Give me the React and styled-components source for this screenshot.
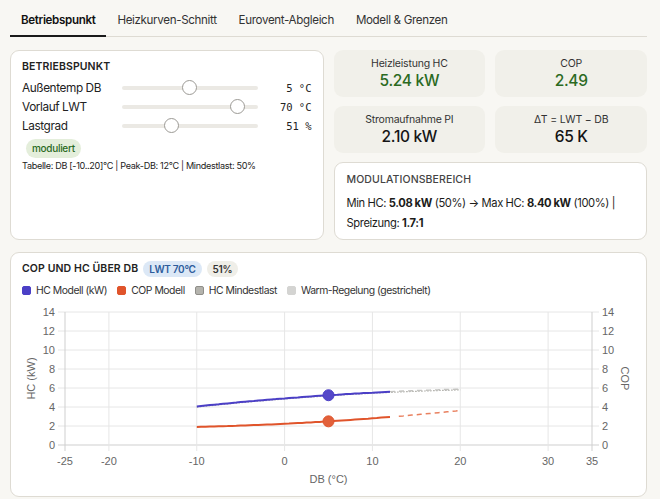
import React from 'react';
import styled, { createGlobalStyle } from 'styled-components';

const GlobalStyle = createGlobalStyle`
    body {
        margin: 0;
        background: #f8f7f3;
        font-family: Inter, "Noto Sans", sans-serif;
        color: #1c1c1a;
    }
`;

const Page = styled.div`
    padding: 0 13px 0 10px;
`;

const TabBar = styled.div`
    display: flex;
    border-bottom: 1px solid #dedbd3;
`;

const Tab = styled.div`
    padding: 12px 11px 7px;
    font-size: 11.6px;
    line-height: 16px;
    letter-spacing: -0.03em;
    color: ${p => (p.active ? '#111' : '#333')};
    font-weight: ${p => (p.active ? 600 : 400)};
    border-bottom: 2px solid ${p => (p.active ? '#1a1a1a' : 'transparent')};
    margin-bottom: -1px;
`;

const TopGrid = styled.div`
    display: grid;
    grid-template-columns: 1fr 1fr;
    gap: 10px;
    margin-top: 13px;
`;

const Card = styled.div`
    background: #fff;
    border: 1px solid #dedbd3;
    border-radius: 9px;
    box-sizing: border-box;
`;

const SliderCard = styled(Card)`
    padding: 9px 11px 10px 11px;
`;

const CardTitle = styled.div`
    font-size: 10.5px;
    line-height: 14px;
    font-weight: ${p => p.weight || 600};
    letter-spacing: 0.01em;
    text-transform: uppercase;
    white-space: nowrap;
    color: ${p => p.color || '#222'};
`;

const SliderRow = styled.div`
    display: grid;
    grid-template-columns: 100px 1fr 54px;
    align-items: center;
    height: 19px;
`;

const RowLabel = styled.div`
    font-size: 11.8px;
    letter-spacing: -0.035em;
    color: #222;
`;

const Track = styled.div`
    position: relative;
    height: 4px;
    border-radius: 2px;
    background: #ebe9e4;
`;

const Thumb = styled.div`
    position: absolute;
    top: 50%;
    width: 15px;
    height: 15px;
    margin-left: -7.5px;
    margin-top: -7.5px;
    border-radius: 50%;
    background: #fff;
    border: 1px solid #9c9a95;
    box-sizing: border-box;
`;

const RowValue = styled.div`
    font-family: "DejaVu Sans Mono", monospace;
    font-size: 10.5px;
    text-align: right;
    color: #222;
`;

const SliderRows = styled.div`
    margin-top: 4px;
`;

const Pill = styled.span`
    display: inline-block;
    font-size: ${p => p.size || 10}px;
    line-height: ${p => p.h || 19}px;
    padding: 0 6px;
    border-radius: 10px;
    letter-spacing: -0.03em;
    background: ${p => p.bg};
    color: ${p => p.fg};
    font-weight: ${p => p.weight || 500};
`;

const BadgeLine = styled.div`
    display: flex;
    margin: 4px 0 0 4px;
`;

const Note = styled.div`
    margin-top: 1px;
    font-size: 9.1px;
    line-height: 14px;
    letter-spacing: -0.035em;
    color: #222;
`;

const RightCol = styled.div`
    display: flex;
    flex-direction: column;
    gap: 9px;
`;

const MetricGrid = styled.div`
    display: grid;
    grid-template-columns: 1fr 1fr;
    gap: 9px 10px;
`;

const Metric = styled.div`
    background: #f1f0ea;
    border-radius: 9px;
    height: 47px;
    display: flex;
    flex-direction: column;
    align-items: center;
    justify-content: center;
`;

const MetricLabel = styled.div`
    font-size: 10.5px;
    line-height: 14px;
    letter-spacing: -0.02em;
    color: #333;
`;

const MetricValue = styled.div`
    font-size: 15.5px;
    line-height: 20px;
    font-weight: 500;
    letter-spacing: -0.02em;
    color: ${p => (p.green ? '#2b6a1f' : '#151515')};
`;

const ModCard = styled(Card)`
    flex: 1;
    padding: 10px 12px 6px 12px;
`;

const ModText = styled.div`
    margin-top: 6px;
    font-size: 11.2px;
    line-height: 20px;
    letter-spacing: -0.035em;
    color: #1c1c1a;

    b {
        font-weight: 700;
    }
`;

const ChartCard = styled(Card)`
    margin-top: 12px;
    padding: 8px 11px 8px 11px;
`;

const ChartHead = styled.div`
    display: flex;
    align-items: center;
    gap: 5px;
`;

const Legend = styled.div`
    display: flex;
    align-items: center;
    gap: 10px;
    margin-top: 5px;
    height: 16px;
`;

const LegendItem = styled.div`
    display: flex;
    align-items: center;
    gap: 5px;
    font-size: 10.4px;
    letter-spacing: -0.045em;
    color: #333;
`;

const Swatch = styled.span`
    width: 9px;
    height: 9px;
    border-radius: 2px;
    box-sizing: border-box;
    background: ${p => p.fill};
    border: 1px solid ${p => p.edge || p.fill};
`;

const ChartSvg = styled.svg`
    display: block;
    margin-top: 4px;
    font-family: "Liberation Sans", Arial, sans-serif;
`;

const sliders = [
    { label: 'Außentemp DB', value: '5 °C', pos: 0.5 },
    { label: 'Vorlauf LWT', value: '70 °C', pos: 0.9 },
    { label: 'Lastgrad', value: '51 %', pos: 0.35 },
];

const metrics = [
    { label: 'Heizleistung HC', value: '5.24 kW', green: true },
    { label: 'COP', value: '2.49', green: true },
    { label: 'Stromaufnahme PI', value: '2.10 kW' },
    { label: 'ΔT = LWT − DB', value: '65 K' },
];

const legend = [
    { label: 'HC Modell (kW)', fill: '#4b3fc6' },
    { label: 'COP Modell', fill: '#e0542b' },
    { label: 'HC Mindestlast', fill: '#b4b3ad', edge: '#8f8e89' },
    { label: 'Warm-Regelung (gestrichelt)', fill: '#d4d4d2' },
];

// chart geometry
const X0 = 43, X1 = 570, Y0 = 143, Y1 = 10;
const xp = db => X0 + (db + 25) * ((X1 - X0) / 60);
const yp = v => Y0 - v * ((Y0 - Y1) / 14);
const hc = d => 4.907 + 0.0729 * d - 0.00127 * d * d;
const cop = d => 2.233 + 0.0452 * d + 0.00123 * d * d;

const line = (fn, from, to, shift = 0) => {
    const pts = [];
    for (let d = from; d <= to + 0.001; d += 0.5) {
        pts.push(`${xp(d).toFixed(1)},${yp(fn(d) + shift).toFixed(1)}`);
    }
    return pts.join(' ');
};

const yTicks = [0, 2, 4, 6, 8, 10, 12, 14];
const xTicks = [-25, -20, -10, 0, 10, 20, 30, 35];

function Chart() {
    return (
        <ChartSvg width="614" height="186" viewBox="0 0 614 186">
            {yTicks.map(v => (
                <g key={'y' + v}>
                    <line x1={X0 - 7} x2={X1 + 7} y1={yp(v)} y2={yp(v)} stroke={v === 0 ? '#cfcfcf' : '#e6e6e6'} strokeWidth="1" />
                    <text x={X0 - 10} y={yp(v) + 4} fontSize="11" fill="#666" textAnchor="end">{v}</text>
                    <text x={X1 + 10} y={yp(v) + 4} fontSize="11" fill="#666">{v}</text>
                </g>
            ))}
            {xTicks.map(d => (
                <g key={'x' + d}>
                    <line x1={xp(d)} x2={xp(d)} y1={Y1} y2={Y0 + 6} stroke={d === -25 || d === 35 ? '#cfcfcf' : '#e6e6e6'} strokeWidth="1" />
                    <text x={xp(d)} y={Y0 + 20} fontSize="11" fill="#666" textAnchor="middle">{d}</text>
                </g>
            ))}
            <text x={xp(5)} y={181} fontSize="11" fill="#666" textAnchor="middle">DB (°C)</text>
            <text x={0} y={0} fontSize="11" fill="#666" textAnchor="middle" transform={`translate(13 ${yp(7)}) rotate(-90)`}>HC (kW)</text>
            <text x={0} y={0} fontSize="11" fill="#666" textAnchor="middle" transform={`translate(599 ${yp(7)}) rotate(90)`}>COP</text>

            <polyline points={line(hc, -10, 20, -0.06)} fill="none" stroke="#a9a8a2" strokeWidth="1.2" strokeDasharray="1.5 1.5" />
            <polyline points={line(hc, 12, 20, 0.02)} fill="none" stroke="#c4c4c1" strokeWidth="1.4" strokeDasharray="5 4" />
            <polyline points={line(hc, -10, 12)} fill="none" stroke="#4b3fc6" strokeWidth="2" />
            <polyline points={line(cop, 13, 20)} fill="none" stroke="#e9805f" strokeWidth="1.5" strokeDasharray="5 4" />
            <polyline points={line(cop, -10, 12)} fill="none" stroke="#e0542b" strokeWidth="2" />
            <circle cx={xp(5)} cy={yp(5.24)} r="5.5" fill="#5548c9" stroke="#4b3fc6" strokeWidth="1" />
            <circle cx={xp(5)} cy={yp(2.49)} r="5.5" fill="#e2603a" stroke="#e0542b" strokeWidth="1" />
        </ChartSvg>
    );
}

export default function App() {
    return (
        <Page>
            <GlobalStyle />
            <TabBar>
                <Tab active>Betriebspunkt</Tab>
                <Tab>Heizkurven-Schnitt</Tab>
                <Tab>Eurovent-Abgleich</Tab>
                <Tab>Modell &amp; Grenzen</Tab>
            </TabBar>

            <TopGrid>
                <SliderCard>
                    <CardTitle>Betriebspunkt</CardTitle>
                    <SliderRows>
                        {sliders.map(s => (
                            <SliderRow key={s.label}>
                                <RowLabel>{s.label}</RowLabel>
                                <Track>
                                    <Thumb style={{ left: `calc(7.5px + ${s.pos} * (100% - 15px))` }} />
                                </Track>
                                <RowValue>{s.value}</RowValue>
                            </SliderRow>
                        ))}
                    </SliderRows>
                    <BadgeLine>
                        <Pill bg="#e4eedb" fg="#2b6a1f">moduliert</Pill>
                    </BadgeLine>
                    <Note>Tabelle: DB [-10..20]°C | Peak-DB: 12°C | Mindestlast: 50%</Note>
                </SliderCard>

                <RightCol>
                    <MetricGrid>
                        {metrics.map(m => (
                            <Metric key={m.label}>
                                <MetricLabel>{m.label}</MetricLabel>
                                <MetricValue green={m.green}>{m.value}</MetricValue>
                            </Metric>
                        ))}
                    </MetricGrid>
                    <ModCard>
                        <CardTitle color="#444" weight={500}>Modulationsbereich</CardTitle>
                        <ModText>
                            Min HC: <b>5.08 kW</b> (50%) → Max HC: <b>8.40 kW</b> (100%) |<br />
                            Spreizung: <b>1.7:1</b>
                        </ModText>
                    </ModCard>
                </RightCol>
            </TopGrid>

            <ChartCard>
                <ChartHead>
                    <CardTitle>COP und HC über DB</CardTitle>
                    <Pill bg="#dce8f6" fg="#2d5c9c" weight={600} h={16}>LWT 70°C</Pill>
                    <Pill bg="#efeee8" fg="#333" weight={600} h={16}>51%</Pill>
                </ChartHead>
                <Legend>
                    {legend.map(l => (
                        <LegendItem key={l.label}>
                            <Swatch fill={l.fill} edge={l.edge} />
                            {l.label}
                        </LegendItem>
                    ))}
                </Legend>
                <Chart />
            </ChartCard>
        </Page>
    );
}
